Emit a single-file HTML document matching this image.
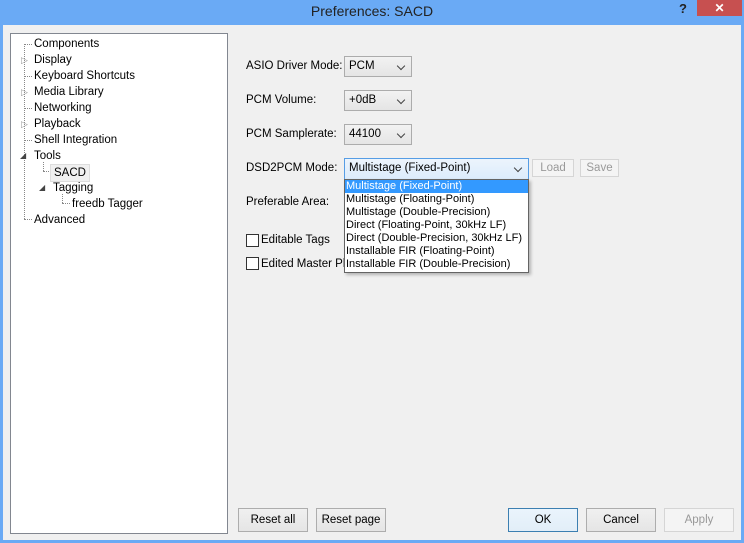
<!DOCTYPE html>
<html><head><style>
*{margin:0;padding:0;box-sizing:border-box}
body{width:744px;height:543px;background:#6aaaf5;font-family:"Liberation Sans",sans-serif;font-size:11.5px;color:#000;position:relative;overflow:hidden}
.a{position:absolute;white-space:nowrap}
#client{position:absolute;left:3px;top:25px;width:738px;height:515px;background:#f0f0f0}
#tree{position:absolute;left:10px;top:33px;width:218px;height:501px;background:#fff;border:1px solid #828790}
.t{position:absolute;font-size:11.5px;line-height:14px}
.dl{position:absolute;border-left:1px dotted #888}
.dh{position:absolute;border-top:1px dotted #888;height:0}
.cb{position:absolute;background:linear-gradient(#f2f2f2,#e5e5e5);border:1px solid #acacac;padding-left:4px;line-height:19px}
.cb:after{content:"";position:absolute;right:7px;top:6px;width:5px;height:5px;border-right:1.5px solid #444;border-bottom:1.5px solid #444;transform:rotate(45deg)}
.btn{position:absolute;background:linear-gradient(#f0f0f0,#e5e5e5);border:1px solid #adadad;text-align:center;line-height:22px}
.chk{position:absolute;width:13px;height:13px;background:#fff;border:1px solid #333}
</style></head><body>
<div class="a" style="left:0;top:3px;width:744px;text-align:center;font-size:14px;color:#222">Preferences: SACD</div>
<div class="a" style="left:679px;top:1px;font-size:13px;font-weight:bold;color:#222">?</div>
<div class="a" style="left:697px;top:0;width:45px;height:16px;background:#c75050;color:#fff;text-align:center;font-size:12px;font-weight:bold;line-height:16px">✕</div>
<div id="client"></div>
<div id="tree">
 <div class="dl" style="left:13px;top:10px;height:175px"></div>
 <div class="dh" style="left:13px;top:10px;width:8px"></div>
 <div class="dh" style="left:13px;top:42px;width:8px"></div>
 <div class="dh" style="left:13px;top:74px;width:8px"></div>
 <div class="dh" style="left:13px;top:106px;width:8px"></div>
 <div class="dh" style="left:13px;top:185px;width:8px"></div>
 <div class="dl" style="left:32px;top:128px;height:9px"></div>
 <div class="dh" style="left:32px;top:137px;width:8px"></div>
 <div class="dl" style="left:51px;top:160px;height:9px"></div>
 <div class="dh" style="left:51px;top:169px;width:8px"></div>
 <div class="t" style="left:10px;top:19px;color:#999;font-size:9px">▷</div>
 <div class="t" style="left:10px;top:51px;color:#999;font-size:9px">▷</div>
 <div class="t" style="left:10px;top:83px;color:#999;font-size:9px">▷</div>
 <div class="t" style="left:9px;top:115px;color:#444;font-size:8px">◢</div>
 <div class="t" style="left:28px;top:147px;color:#444;font-size:8px">◢</div>
 <div class="t" style="left:23px;top:3px">Components</div>
 <div class="t" style="left:23px;top:19px">Display</div>
 <div class="t" style="left:23px;top:35px">Keyboard Shortcuts</div>
 <div class="t" style="left:23px;top:51px">Media Library</div>
 <div class="t" style="left:23px;top:67px">Networking</div>
 <div class="t" style="left:23px;top:83px">Playback</div>
 <div class="t" style="left:23px;top:99px">Shell Integration</div>
 <div class="t" style="left:23px;top:115px">Tools</div>
 <div class="t" style="left:39px;top:130px;padding:1px 3px;background:#f0f0f0;border:1px solid #ddd">SACD</div>
 <div class="t" style="left:42px;top:147px">Tagging</div>
 <div class="t" style="left:61px;top:163px">freedb Tagger</div>
 <div class="t" style="left:23px;top:179px">Advanced</div>
</div>
<div class="a" style="left:246px;top:60px">ASIO Driver Mode:</div>
<div class="a" style="left:246px;top:94px">PCM Volume:</div>
<div class="a" style="left:246px;top:128px">PCM Samplerate:</div>
<div class="a" style="left:246px;top:162px">DSD2PCM Mode:</div>
<div class="a" style="left:246px;top:196px">Preferable Area:</div>
<div class="cb" style="left:344px;top:56px;width:68px;height:21px">PCM</div>
<div class="cb" style="left:344px;top:90px;width:68px;height:21px">+0dB</div>
<div class="cb" style="left:344px;top:124px;width:68px;height:21px">44100</div>
<div class="cb" style="left:344px;top:158px;width:185px;height:22px;border-color:#569de5;background:linear-gradient(#ecf4fc,#dcecfc)">Multistage (Fixed-Point)</div>
<div class="btn" style="left:532px;top:159px;width:42px;height:18px;line-height:16px;color:#999;border-color:#d5d5d5;background:#f4f4f4">Load</div>
<div class="btn" style="left:580px;top:159px;width:39px;height:18px;line-height:16px;color:#999;border-color:#d5d5d5;background:#f4f4f4">Save</div>
<div class="chk" style="left:246px;top:234px"></div>
<div class="a" style="left:261px;top:234px">Editable Tags</div>
<div class="chk" style="left:246px;top:257px"></div>
<div class="a" style="left:261px;top:258px">Edited Master Pla</div>
<div class="a" style="left:344px;top:179px;width:185px;height:94px;background:#fff;border:1px solid #646464;box-shadow:2px 2px 3px rgba(0,0,0,.25);line-height:13px;font-size:11px">
 <div style="background:#3399ff;color:#fff;padding-left:1px">Multistage (Fixed-Point)</div>
 <div style="padding-left:1px">Multistage (Floating-Point)</div>
 <div style="padding-left:1px">Multistage (Double-Precision)</div>
 <div style="padding-left:1px">Direct (Floating-Point, 30kHz LF)</div>
 <div style="padding-left:1px">Direct (Double-Precision, 30kHz LF)</div>
 <div style="padding-left:1px">Installable FIR (Floating-Point)</div>
 <div style="padding-left:1px">Installable FIR (Double-Precision)</div>
</div>
<div class="btn" style="left:238px;top:508px;width:70px;height:24px">Reset all</div>
<div class="btn" style="left:316px;top:508px;width:70px;height:24px">Reset page</div>
<div class="btn" style="left:508px;top:508px;width:70px;height:24px;border-color:#3c7fb1;background:linear-gradient(#eaf4fc,#e2eef8)">OK</div>
<div class="btn" style="left:586px;top:508px;width:70px;height:24px">Cancel</div>
<div class="btn" style="left:664px;top:508px;width:70px;height:24px;color:#999;border-color:#d5d5d5;background:#f4f4f4">Apply</div>
</body></html>
